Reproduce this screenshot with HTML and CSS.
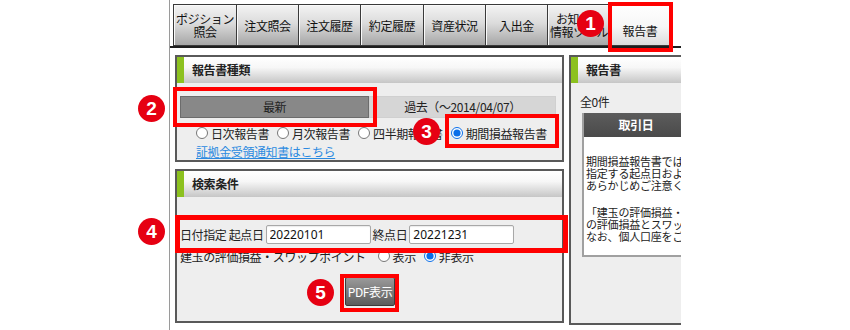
FILE: index.html
```html
<!DOCTYPE html>
<html lang="ja">
<head>
<meta charset="utf-8">
<title>報告書</title>
<link rel="stylesheet" href="styles.css">
</head>
<body>
<div class="page">
  <nav class="tabs">
    <div class="tab wide">ポジション<br>照会</div>
    <div class="tab">注文照会</div>
    <div class="tab">注文履歴</div>
    <div class="tab wide">約定履歴</div>
    <div class="tab">資産状況</div>
    <div class="tab">入出金</div>
    <div class="tab wide">お知らせ<br>情報ツール</div>
    <div class="tab active">報告書</div>
  </nav>
  <div class="tabline"></div>
  <div class="content">
    <div class="leftcol">
      <section class="panel p1">
        <h2 class="ph">報告書種類</h2>
        <div class="pb">
          <div class="seg">
            <div class="seg-btn on">最新</div>
            <div class="seg-btn off">過去（～2014/04/07）</div>
          </div>
          <div class="radios">
            <label class="rl"><input type="radio" name="kind">日次報告書</label>
            <label class="rl"><input type="radio" name="kind">月次報告書</label>
            <label class="rl"><input type="radio" name="kind">四半期報告書</label>
            <label class="rl"><input type="radio" name="kind" checked>期間損益報告書</label>
          </div>
          <a class="link" href="#">証拠金受領通知書はこちら</a>
        </div>
      </section>
      <section class="panel p2">
        <h2 class="ph">検索条件</h2>
        <div class="pb">
          <div class="daterow">
            <span>日付指定 起点日</span>
            <input class="inp" type="text" value="20220101">
            <span class="endlbl">終点日</span>
            <input class="inp" type="text" value="20221231">
          </div>
          <div class="swaprow">
            <span>建玉の評価損益・スワップポイント</span>
            <label class="rl first"><input type="radio" name="swap">表示</label>
            <label class="rl"><input type="radio" name="swap" checked>非表示</label>
          </div>
          <button class="pdf" type="button">PDF表示</button>
        </div>
      </section>
    </div>
    <section class="panel right">
      <h2 class="ph">報告書</h2>
      <div class="pb rb">
        <div class="count">全0件</div>
        <div class="tbl">
          <div class="th">取引日</div>
          <div class="msg">
            <p>期間損益報告書では、指定した期間内に決済された取引の損益を表示します。<br>指定する起点日および終点日は受渡日基準となりますので、<br>あらかじめご注意ください。</p>
            <p>「建玉の評価損益・スワップポイント」で表示を選択した場合、終点日時点の建玉<br>の評価損益とスワップポイントを表示します。<br>なお、個人口座をご利用のお客様は報告書をご確認ください。</p>
          </div>
        </div>
      </div>
    </section>
  </div>
</div>

<div class="mark b1"></div>
<div class="mark b2"></div>
<div class="mark b3"></div>
<div class="mark b4"></div>
<div class="mark b5"></div>
<div class="num n1">1</div>
<div class="num n2">2</div>
<div class="num n3">3</div>
<div class="num n4">4</div>
<div class="num n5">5</div>
</body>
</html>
```

FILE: styles.css
```css
* { box-sizing: border-box; }
html, body { margin: 0; padding: 0; background: #fff; }
body {
  position: relative;
  width: 850px;
  height: 330px;
  overflow: hidden;
  font-family: "Noto Sans CJK JP", "Noto Sans", sans-serif;
  font-size: 12px;
  color: #222;
  letter-spacing: -0.4px;
}
.page {
  margin-left: 169px;
  width: 512px;
  height: 330px;
  border-left: 1px solid #9a9a9a;
  overflow: hidden;
}
.tabs {
  display: flex;
  height: 46px;
  padding: 4px 0 0 3px;
}
.tab {
  flex: none;
  width: 62px;
  height: 42px;
  border: 1px solid #3a3a3a;
  border-right: none;
  background: linear-gradient(#f3f3f3, #dcdcdc 45%, #a6a6a6);
  box-shadow: inset 1px 1px 0 #fafafa;
  display: flex;
  align-items: center;
  justify-content: center;
  text-align: center;
  line-height: 13px;
  color: #111;
  white-space: nowrap;
}
.tab.wide { width: 63px; }
.tab.active {
  width: 60px;
  padding-top: 10px;
  border-right: 1px solid #3a3a3a;
  background: linear-gradient(#ffffff, #f6f6f6 55%, #dcdcdc);
}
.tabline { height: 2px; background: #1e1e1e; }

.content {
  display: flex;
  gap: 5px;
  padding: 7px 0 0 5px;
}
.leftcol {
  flex: none;
  width: 389px;
  display: flex;
  flex-direction: column;
  gap: 7px;
}
.panel {
  border: 2px solid #595959;
  background: #eeeeee;
}
.p1 { height: 107px; }
.p2 { height: 154px; }
.right { flex: none; width: 200px; height: 270px; }
.ph {
  margin: 0;
  height: 26px;
  border-left: 7px solid #8cc11f;
  background: linear-gradient(#ffffff, #f7f7f7 40%, #c6c6c6);
  padding-left: 8px;
  font-size: 12px;
  font-weight: bold;
  line-height: 26px;
  color: #222;
}

/* panel 1 */
.p1 .pb { padding-top: 13px; }
.seg { display: flex; height: 22px; margin-left: 3px; }
.seg-btn {
  flex: none;
  text-align: center;
  line-height: 20px;
  color: #222;
}
.seg-btn.on { width: 189px; background: #888888; border: 1px solid #6c6c6c; }
.seg-btn.off { width: 187px; background: #d6d6d6; border: 1px solid #d0d0d0; }
.radios {
  display: flex;
  align-items: center;
  height: 16px;
  margin: 7px 0 0 19px;
  white-space: nowrap;
}
.rl {
  display: inline-flex;
  align-items: center;
  margin-right: 8px;
}
.rl input {
  width: 12px;
  height: 12px;
  margin: 0 3px 0 0;
  accent-color: #0a6ee8;
}
.link {
  display: block;
  margin: 3px 0 0 19px;
  line-height: 16px;
  color: #2b8ae0;
  text-decoration: underline;
}

/* panel 2 */
.p2 .pb { padding-top: 27px; }
.daterow {
  display: flex;
  align-items: center;
  height: 20px;
  margin-left: 3px;
  white-space: nowrap;
}
.inp {
  width: 105px;
  height: 19px;
  margin: 0 0 0 2px;
  padding: 0 3px;
  border: 1px solid #a8a8a8;
  border-radius: 2px;
  background: #fff;
  box-shadow: inset 0 1px 1px rgba(0,0,0,0.08);
  font-family: "Noto Sans", sans-serif;
  font-size: 12px;
  letter-spacing: 0;
  color: #111;
}
.endlbl { margin-left: 2px; }
.swaprow {
  display: flex;
  align-items: center;
  height: 16px;
  margin: 4px 0 0 3px;
  white-space: nowrap;
}
.swaprow .rl.first { margin-left: 12px; }
.pdf {
  display: block;
  width: 50px;
  height: 29px;
  margin: 13px 0 0 168px;
  padding: 0;
  border: 1px solid #3c3c3c;
  border-radius: 2px;
  background: linear-gradient(#9a9a9a, #7c7c7c 50%, #5c5c5c);
  color: #fff;
  font-family: "Noto Sans CJK JP", sans-serif;
  font-size: 12px;
  letter-spacing: -0.4px;
}

/* right panel */
.rb { padding-left: 9px; }
.count { margin-top: 11px; line-height: 16px; }
.tbl {
  width: 108px;
  margin: 3px 0 0 2px;
  border: 2px solid #a0a0a0;
  border-top: none;
}
.th {
  height: 24px;
  background: linear-gradient(#5c5c5c, #4a4a4a);
  color: #fff;
  font-weight: bold;
  text-align: center;
  line-height: 24px;
}
.msg {
  height: 118px;
  background: #fff;
  padding: 18px 0 0 2px;
  font-size: 11px;
  line-height: 12px;
  white-space: nowrap;
  letter-spacing: -0.2px;
}
.msg p { margin: 0; }
.msg p + p { margin-top: 15px; }

/* callouts */
.mark { position: absolute; border: 4px solid #ff0000; }
.b1 { left: 608px; top: 2px; width: 65px; height: 50px; }
.b2 { left: 173px; top: 87px; width: 204px; height: 40px; }
.b3 { left: 445px; top: 114px; width: 114px; height: 34px; }
.b4 { left: 175px; top: 215px; width: 393px; height: 38px; border-width: 5px; }
.b5 { left: 340px; top: 274px; width: 59px; height: 38px; }
.num {
  position: absolute;
  width: 27px;
  height: 27px;
  border-radius: 50%;
  background: #e60012;
  color: #fff;
  font-family: "Liberation Sans", Arial, sans-serif;
  font-weight: bold;
  font-size: 19px;
  letter-spacing: 0;
  line-height: 27px;
  text-align: center;
}
.n1 { left: 577px; top: 10px; }
.n2 { left: 138px; top: 95px; }
.n3 { left: 413px; top: 118px; }
.n4 { left: 138px; top: 218px; }
.n5 { left: 307px; top: 279px; }
```
